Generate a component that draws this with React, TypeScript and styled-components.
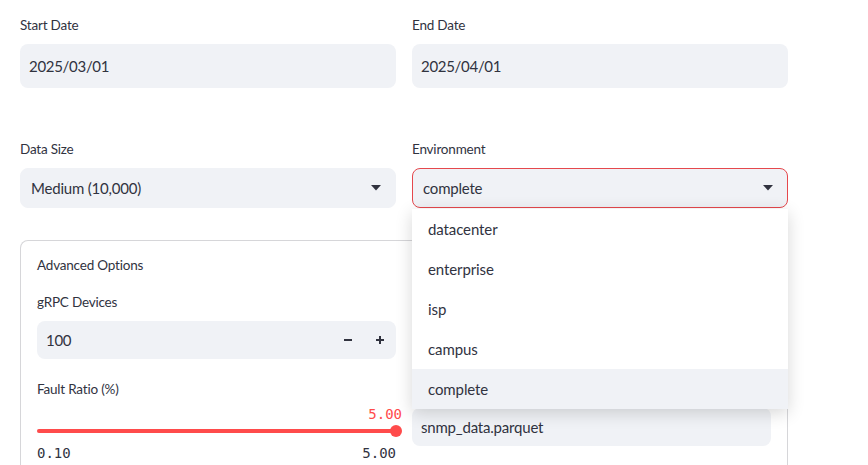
import React from "react";
import styled, { createGlobalStyle } from "styled-components";

const GlobalStyle = createGlobalStyle`
  body {
    margin: 0;
    background: #ffffff;
    font-family: Lato, "Noto Sans", sans-serif;
    color: #31333f;
  }
`;

const envOptions = ["datacenter", "enterprise", "isp", "campus", "complete"];

function Caret() {
  return (
    <svg width="10" height="6" viewBox="0 0 10 6">
      <path d="M0 0 L10 0 L5 5.5 Z" fill="#31333f" />
    </svg>
  );
}

function MinusIcon() {
  return (
    <svg width="10" height="10" viewBox="0 0 10 10">
      <path d="M1 5 H9" stroke="#31333f" strokeWidth="2" />
    </svg>
  );
}

function PlusIcon() {
  return (
    <svg width="10" height="10" viewBox="0 0 10 10">
      <path d="M1 5 H9 M5 1 V9" stroke="#31333f" strokeWidth="2" />
    </svg>
  );
}

export default function App() {
  return (
    <>
      <GlobalStyle />
      <Page>
        <Row>
          <Field>
            <Label>Start Date</Label>
            <DateBox>2025/03/01</DateBox>
          </Field>
          <Field>
            <Label>End Date</Label>
            <DateBox>2025/04/01</DateBox>
          </Field>
        </Row>

        <Row $top={52}>
          <Field>
            <Label>Data Size</Label>
            <Select>
              <span>Medium (10,000)</span>
              <Caret />
            </Select>
          </Field>
          <Field>
            <Label>Environment</Label>
            <SelectWrap>
              <Select $focused>
                <span>complete</span>
                <Caret />
              </Select>
              <Menu>
                {envOptions.map((opt) => (
                  <MenuItem key={opt} $active={opt === "complete"}>
                    {opt}
                  </MenuItem>
                ))}
              </Menu>
            </SelectWrap>
          </Field>
        </Row>

        <Expander>
          <Summary>Advanced Options</Summary>
          <ExpanderBody>
            <Column>
              <Field>
                <Label>gRPC Devices</Label>
                <NumberBox>
                  <span>100</span>
                  <Steppers>
                    <StepButton>
                      <MinusIcon />
                    </StepButton>
                    <StepButton>
                      <PlusIcon />
                    </StepButton>
                  </Steppers>
                </NumberBox>
              </Field>
              <Field $top={21}>
                <Label>Fault Ratio (%)</Label>
                <Slider>
                  <SliderValue>5.00</SliderValue>
                  <Track>
                    <Fill style={{ width: "100%" }} />
                    <Thumb />
                  </Track>
                  <Ticks>
                    <span>0.10</span>
                    <span>5.00</span>
                  </Ticks>
                </Slider>
              </Field>
            </Column>
            {/* right column: its upper fields sit under the open menu */}
            <Column $top={115}>
              <TextBox>snmp_data.parquet</TextBox>
            </Column>
          </ExpanderBody>
        </Expander>
      </Page>
    </>
  );
}

const Page = styled.div`
  width: 768px;
  padding: 16px 0 0 20px;
  display: flex;
  flex-direction: column;
`;

const Row = styled.div<{ $top?: number }>`
  display: grid;
  grid-template-columns: 1fr 1fr;
  gap: 16px;
  margin-top: ${(p) => p.$top ?? 0}px;
`;

const Field = styled.div<{ $top?: number }>`
  display: flex;
  flex-direction: column;
  margin-top: ${(p) => p.$top ?? 0}px;
`;

const Label = styled.label`
  height: 24px;
  margin-bottom: 4px;
  font-size: 13.5px;
  line-height: 18px;
  letter-spacing: -0.2px;
  color: #31333f;
`;

const DateBox = styled.div`
  height: 44px;
  box-sizing: border-box;
  border-radius: 8px;
  background: #f0f2f6;
  padding: 0 9px;
  display: flex;
  align-items: center;
  font-size: 15px;
  letter-spacing: -0.3px;
`;

const SelectWrap = styled.div`
  position: relative;
`;

const Select = styled.div<{ $focused?: boolean }>`
  height: 40px;
  box-sizing: border-box;
  border-radius: 8px;
  background: #f0f2f6;
  border: 1px solid ${(p) => (p.$focused ? "#e5484d" : "#f0f2f6")};
  padding: 0 14px 0 10px;
  display: flex;
  align-items: center;
  justify-content: space-between;
  font-size: 15px;
  letter-spacing: -0.2px;
`;

const Menu = styled.div`
  position: absolute;
  top: 41px;
  left: 0;
  right: 0;
  background: #ffffff;
  box-shadow: 0 4px 16px rgba(0, 0, 0, 0.16);
  z-index: 10;
`;

const MenuItem = styled.div<{ $active?: boolean }>`
  height: 40px;
  display: flex;
  align-items: center;
  padding-left: 16px;
  font-size: 15px;
  letter-spacing: -0.1px;
  background: ${(p) => (p.$active ? "#f0f2f6" : "transparent")};
`;

const Expander = styled.div`
  margin-top: 32px;
  border: 1px solid #d6d6d9;
  border-bottom: none;
  border-radius: 8px 8px 0 0;
  height: 240px;
`;

const Summary = styled.div`
  padding: 12px 16px;
  font-size: 13.5px;
  line-height: 24px;
  letter-spacing: -0.2px;
`;

const ExpanderBody = styled.div`
  display: grid;
  grid-template-columns: 1fr 1fr;
  gap: 16px;
  padding: 4px 16px 0 16px;
`;

const Column = styled.div<{ $top?: number }>`
  display: flex;
  flex-direction: column;
  padding-top: ${(p) => p.$top ?? 0}px;
`;

const NumberBox = styled.div`
  height: 38px;
  box-sizing: border-box;
  border-radius: 8px;
  background: #f0f2f6;
  padding: 0 0 0 9px;
  display: flex;
  align-items: center;
  justify-content: space-between;
  font-size: 15px;
  letter-spacing: -0.3px;
`;

const Steppers = styled.div`
  display: flex;
  align-items: center;
`;

const StepButton = styled.div`
  width: 32px;
  height: 32px;
  display: flex;
  align-items: center;
  justify-content: center;
`;

const TextBox = styled.div`
  height: 38px;
  box-sizing: border-box;
  border-radius: 8px;
  background: #f0f2f6;
  padding: 0 9px;
  display: flex;
  align-items: center;
  font-size: 15px;
  letter-spacing: -0.2px;
`;

const Slider = styled.div`
  display: flex;
  flex-direction: column;
  margin-top: -3px;
`;

const SliderValue = styled.div`
  align-self: flex-end;
  margin-right: -6px;
  font-family: "DejaVu Sans Mono", "Liberation Mono", monospace;
  font-size: 14px;
  line-height: 18px;
  color: #ff4b4b;
`;

const Track = styled.div`
  position: relative;
  height: 4px;
  margin: 6px 0 11px;
  border-radius: 2px;
  background: #e6e8ee;
`;

const Fill = styled.div`
  height: 100%;
  border-radius: 2px;
  background: #ff4b4b;
`;

const Thumb = styled.div`
  position: absolute;
  right: -6px;
  top: -4px;
  width: 12px;
  height: 12px;
  border-radius: 50%;
  background: #ff4b4b;
`;

const Ticks = styled.div`
  display: flex;
  justify-content: space-between;
  font-family: "DejaVu Sans Mono", "Liberation Mono", monospace;
  font-size: 14px;
  line-height: 18px;
  color: #31333f;
`;
